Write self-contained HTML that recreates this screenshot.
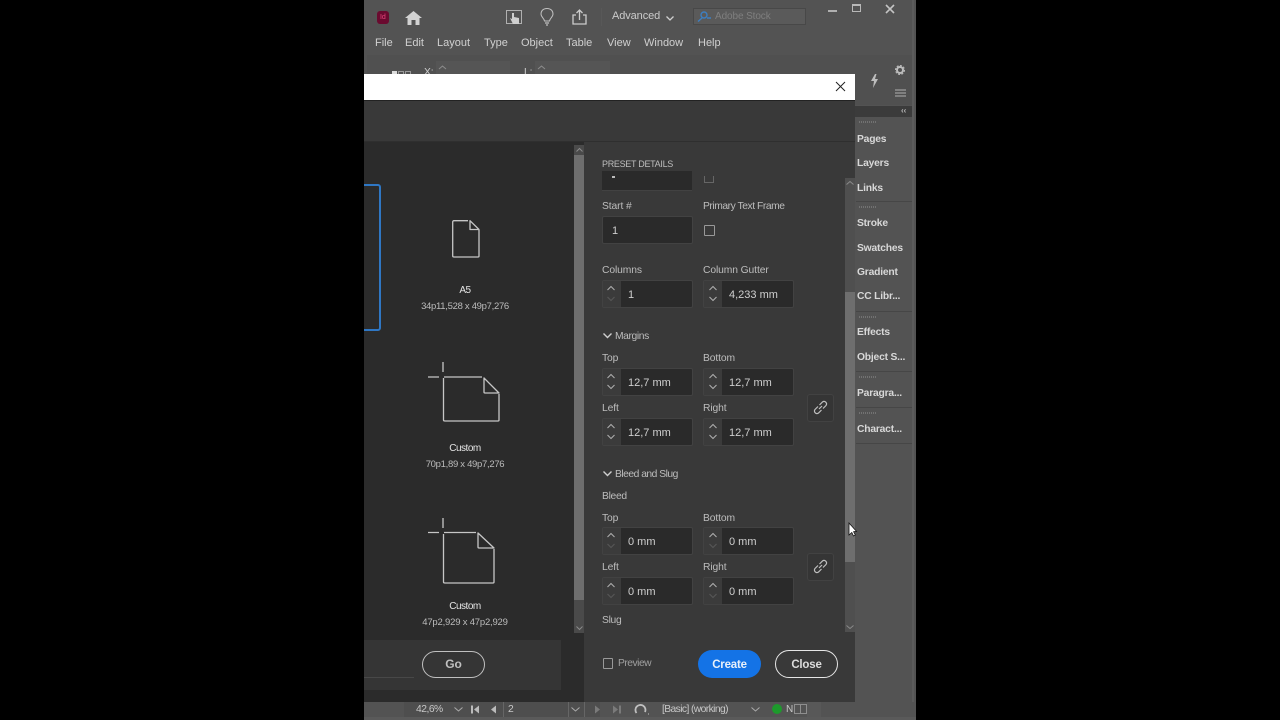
<!DOCTYPE html>
<html><head><meta charset="utf-8"><style>
html,body{margin:0;padding:0;width:1280px;height:720px;background:#000;overflow:hidden;font-family:"Liberation Sans",sans-serif}
.a{position:absolute}
.t{position:absolute;white-space:nowrap;font-size:10.3px;letter-spacing:-.1px;color:#bdbdbd;line-height:12px;margin-top:1px}
.d{font-size:9.5px;letter-spacing:-.3px;left:364px;width:202px;text-align:center;color:#bcbcbc}
.n{font-size:10px;letter-spacing:-.5px;left:364px;width:202px;text-align:center;color:#e4e4e4}
.m{position:absolute;top:37px;font-size:11px;color:#d0d0d0;line-height:13px;white-space:nowrap}
.p{position:absolute;left:857px;font-size:10.3px;letter-spacing:-.2px;font-weight:bold;color:#d8d8d8;line-height:12px;white-space:nowrap;margin-top:1px}
.f{position:absolute;background:#2a2a2a;border:1px solid #424242;border-radius:2px;box-sizing:border-box;height:28px}
.s{position:absolute;left:0;top:0;bottom:0;width:18px;background:#3b3b3b;border-right:1px solid #2a2a2a}
.v{position:absolute;left:25px;top:8px;font-size:11px;color:#cfcfcf;line-height:13px;white-space:nowrap}
svg{position:absolute;overflow:visible}
.sep{position:absolute;left:856px;width:56px;height:1px;background:#464646}
.g{position:absolute;left:859px;width:18px;height:2px;background:repeating-linear-gradient(90deg,#727272 0 1px,transparent 1px 2px)}
</style></head><body>
<div class="a" style="left:364px;top:0;width:552px;height:720px;background:#535353"></div>
<div class="a" style="left:912px;top:0;width:2px;height:720px;background:#5c5c5c"></div>
<div class="a" style="left:367px;top:55px;width:545px;height:50px;background:#505050"></div>

<div class="a" style="left:377px;top:11px;width:12px;height:13px;background:#6a0a2f;border-radius:3px"></div>
<div class="t" style="left:380px;top:11px;font-size:7px;color:#e8467e">Id</div>
<svg style="left:405px;top:11px" width="17" height="14"><path d="M0 7 L8.500 0 L17 7 L14.500 7 L14.500 14 L10.500 14 L10.500 9 L6.500 9 L6.500 14 L2.500 14 L2.500 7 Z" fill="#d2d2d2"/></svg>
<svg style="left:506px;top:10px" width="17" height="15" fill="none"><rect x=".5" y=".5" width="15" height="13" stroke="#b0b0b0"/><path d="M6 3 L6 9 L4 8 L7 14 L13 14 L13 8 L8 7 L8 3 Z" fill="#cfcfcf"/></svg>
<svg style="left:540px;top:8px" width="14" height="18" fill="none" stroke="#c0c0c0"><path d="M7 .5 C3 .5 1 3 1 6 C1 9 4 10 4.500 13 L9.500 13 C10 10 13 9 13 6 C13 3 11 .5 7 .5 Z"/><path d="M5 15 H9 M6 17 H8" stroke-width="1.300"/></svg>
<svg style="left:572px;top:9px" width="15" height="16" fill="none" stroke="#cccccc" stroke-width="1.300"><path d="M4 6 H1 V15 H14 V6 H11 M7.500 11 V1 M4.500 4 L7.500 1 L10.500 4"/></svg>
<div class="a" style="left:601px;top:8px;width:1px;height:18px;background:#585858"></div>
<div class="m" style="left:612px;top:10px;color:#cbcbcb;letter-spacing:-.1px">Advanced</div>
<svg style="left:666px;top:16px" width="8" height="5" fill="none" stroke="#d0d0d0" stroke-width="1.300"><path d="M.5 .5 L4 4 L7.500 .5"/></svg>
<div class="a" style="left:693px;top:8px;width:113px;height:17px;background:#5a5a5a;border:1px solid #484848;box-sizing:border-box"></div>
<svg style="left:697px;top:11px" width="14" height="11" fill="none" stroke="#3d7fc2" stroke-width="1.400"><circle cx="7" cy="4" r="3"/><path d="M5 7 L1 10.500 M10 7 H14"/></svg>
<div class="t" style="left:715px;top:10px;color:#7f7f7f;font-size:10px">Adobe Stock</div>
<div class="a" style="left:828px;top:10px;width:9px;height:2px;background:#b0b0b0"></div>
<div class="a" style="left:852px;top:4px;width:9px;height:8px;border:1.500px solid #b8b8b8;border-top-width:2.500px;box-sizing:border-box"></div>
<svg style="left:885px;top:4px" width="10" height="10" stroke="#c4c4c4" stroke-width="1.600"><path d="M1 1 L9 9 M9 1 L1 9"/></svg>

<div class="m" style="left:375px">File</div>
<div class="m" style="left:405px">Edit</div>
<div class="m" style="left:437px">Layout</div>
<div class="m" style="left:484px">Type</div>
<div class="m" style="left:521px">Object</div>
<div class="m" style="left:566px">Table</div>
<div class="m" style="left:607px">View</div>
<div class="m" style="left:644px">Window</div>
<div class="m" style="left:698px">Help</div>

<div class="a" style="left:436px;top:61px;width:74px;height:13px;background:#555"></div>
<div class="a" style="left:535px;top:61px;width:75px;height:13px;background:#555"></div>
<div class="a" style="left:392px;top:71px;width:5px;height:3px;background:#ddd"></div>
<div class="a" style="left:398px;top:71px;width:6px;height:3px;border:1px solid #999;border-bottom:0;box-sizing:border-box"></div>
<div class="a" style="left:405px;top:71px;width:6px;height:3px;border:1px solid #999;border-bottom:0;box-sizing:border-box"></div>
<div class="t" style="left:424px;top:66px;color:#cfcfcf">X:</div>
<div class="t" style="left:524px;top:66px;color:#cfcfcf">L:</div>
<svg style="left:438px;top:65px" width="9" height="5" fill="none" stroke="#8d8d8d"><path d="M1 4 L4.500 1 L8 4"/></svg>
<svg style="left:537px;top:65px" width="9" height="5" fill="none" stroke="#8d8d8d"><path d="M1 4 L4.500 1 L8 4"/></svg>

<svg style="left:870px;top:74px" width="9" height="14" fill="#bdbdbd"><path d="M5 0 L1 7 H4 L3 14 L8 5 H5 L6.500 0 Z"/></svg>
<svg style="left:895px;top:65px" width="10" height="10"><circle cx="5" cy="5" r="3" fill="none" stroke="#bcbcbc" stroke-width="2"/><circle cx="5" cy="5" r="4.500" fill="none" stroke="#bcbcbc" stroke-width="1" stroke-dasharray="2 1.500"/></svg>
<svg style="left:895px;top:89px" width="11" height="8" stroke="#b0b0b0"><path d="M0 1 H11 M0 4 H11 M0 7 H11"/></svg>

<div class="a" style="left:855px;top:106px;width:57px;height:11px;background:#3b3b3b"></div>
<div class="t" style="left:901px;top:105px;font-size:8px;color:#bbb;font-weight:bold;line-height:10px">‹‹</div>
<div class="g" style="top:121px"></div>
<div class="p" style="top:133px">Pages</div>
<div class="p" style="top:157px">Layers</div>
<div class="p" style="top:182px">Links</div>
<div class="sep" style="top:201px"></div>
<div class="g" style="top:206px"></div>
<div class="p" style="top:217px">Stroke</div>
<div class="p" style="top:242px">Swatches</div>
<div class="p" style="top:266px">Gradient</div>
<div class="p" style="top:290px">CC Libr...</div>
<div class="sep" style="top:311px"></div>
<div class="g" style="top:316px"></div>
<div class="p" style="top:326px">Effects</div>
<div class="p" style="top:351px">Object S...</div>
<div class="sep" style="top:371px"></div>
<div class="g" style="top:376px"></div>
<div class="p" style="top:387px">Paragra...</div>
<div class="sep" style="top:407px"></div>
<div class="g" style="top:412px"></div>
<div class="p" style="top:423px">Charact...</div>
<div class="sep" style="top:443px"></div>

<div class="a" style="left:364px;top:74px;width:491px;height:26px;background:#fff"></div>
<svg style="left:836px;top:82px" width="9" height="9" stroke="#222" stroke-width="1"><path d="M0 0 L9 9 M9 0 L0 9"/></svg>
<div class="a" style="left:364px;top:100px;width:491px;height:602px;background:#393939;border-top:1px solid #222;box-sizing:border-box"></div>
<div class="a" style="left:364px;top:141px;width:491px;height:1px;background:#2f2f2f"></div>
<div class="a" style="left:364px;top:142px;width:220px;height:560px;background:#2b2b2b"></div>
<div class="a" style="left:364px;top:640px;width:197px;height:50px;background:#353535"></div>
<div class="a" style="left:364px;top:677px;width:50px;height:1px;background:#484848"></div>

<div class="a" style="left:574px;top:145px;width:10px;height:488px;background:#4a4a4a"></div>
<div class="a" style="left:574px;top:155px;width:10px;height:445px;background:#6e6e6e"></div>
<svg style="left:576px;top:148px" width="7" height="4" fill="none" stroke="#8a8a8a"><path d="M.5 3.500 L3.500 .5 L6.500 3.500"/></svg>
<svg style="left:576px;top:626px" width="7" height="4" fill="none" stroke="#8a8a8a"><path d="M.5 .5 L3.500 3.500 L6.500 .5"/></svg>

<div class="a" style="left:350px;top:184px;width:31px;height:147px;border:2px solid #2f77c4;border-radius:3px;box-sizing:border-box"></div>
<div class="a" style="left:0;top:0;width:364px;height:720px;background:#000"></div>

<svg style="left:452px;top:220px" width="28" height="38" fill="none" stroke="#c6c6c6" stroke-width="1.300" stroke-linejoin="round"><path d="M16 .7 H2 Q.7 .7 .7 2 V36 Q.7 37 2 37 H26 Q27 37 27 36 V10"/><path d="M18 .7 V9.500 H27 Z"/></svg>
<div class="t n" style="top:284px">A5</div>
<div class="t d" style="top:300px">34p11,528 x 49p7,276</div>

<svg style="left:428px;top:362px" width="72" height="60" fill="none" stroke="#c6c6c6" stroke-width="1.300" stroke-linejoin="round"><path d="M15 0 V10 M0 15 H11"/><path d="M16 15 H54 M15.500 16 V58 Q15.500 59 17 59 H70 Q71 59 71 58 V32"/><path d="M56 16 V30 Q56 31 57 31 H71 Z"/></svg>
<div class="t n" style="top:442px">Custom</div>
<div class="t d" style="top:458px">70p1,89 x 49p7,276</div>

<svg style="left:428px;top:518px" width="67" height="67" fill="none" stroke="#c6c6c6" stroke-width="1.300" stroke-linejoin="round"><path d="M15 0 V10 M0 14.500 H11"/><path d="M16 14.500 H48 M15.500 16 V64 Q15.500 65 17 65 H65 Q66 65 66 64 V31"/><path d="M50 15 V29 Q50 30 51 30 H66 Z"/></svg>
<div class="t n" style="top:600px">Custom</div>
<div class="t d" style="top:616px;letter-spacing:-.2px">47p2,929 x 47p2,929</div>

<div class="a" style="left:422px;top:651px;width:63px;height:27px;border:1.500px solid #c0c0c0;border-radius:14px;box-sizing:border-box"></div>
<div class="t" style="left:422px;width:63px;text-align:center;top:656px;font-size:12px;font-weight:bold;color:#c0c0c0;line-height:14px">Go</div>

<div class="t" style="left:602px;top:157px;font-size:9px;letter-spacing:-.3px">PRESET DETAILS</div>
<div class="a" style="left:602px;top:171px;width:90px;height:20px;background:#2a2a2a;border-bottom:1px solid #424242;box-sizing:border-box"></div>
<div class="a" style="left:612px;top:176px;width:3px;height:2px;background:#bbb"></div>
<div class="a" style="left:704px;top:176px;width:10px;height:7px;border:1px solid #666;border-top:0;box-sizing:border-box"></div>

<div class="t" style="left:602px;top:200px">Start #</div>
<div class="t" style="left:703px;top:200px;letter-spacing:-.45px">Primary Text Frame</div>
<div class="f" style="left:602px;top:216px;width:91px"><div class="v" style="left:9px">1</div></div>
<div class="a" style="left:704px;top:225px;width:11px;height:11px;border:1px solid #999;border-radius:1px;box-sizing:border-box"></div>

<div class="t" style="left:602px;top:264px">Columns</div>
<div class="t" style="left:703px;top:264px">Column Gutter</div>
<div class="f" style="left:602px;top:280px;width:91px"><div class="s"></div><div class="v">1</div></div>
<div class="f" style="left:703px;top:280px;width:91px"><div class="s"></div><div class="v">4,233 mm</div></div>

<svg style="left:603px;top:333px" width="9" height="6" fill="none" stroke="#cfcfcf" stroke-width="1.400"><path d="M.5 .5 L4.500 4.500 L8.500 .5"/></svg>
<div class="t" style="left:615px;top:330px;letter-spacing:-.4px">Margins</div>
<div class="t" style="left:602px;top:352px">Top</div>
<div class="t" style="left:703px;top:352px">Bottom</div>
<div class="f" style="left:602px;top:368px;width:91px"><div class="s"></div><div class="v">12,7 mm</div></div>
<div class="f" style="left:703px;top:368px;width:91px"><div class="s"></div><div class="v">12,7 mm</div></div>
<div class="t" style="left:602px;top:402px">Left</div>
<div class="t" style="left:703px;top:402px">Right</div>
<div class="f" style="left:602px;top:418px;width:91px"><div class="s"></div><div class="v">12,7 mm</div></div>
<div class="f" style="left:703px;top:418px;width:91px"><div class="s"></div><div class="v">12,7 mm</div></div>

<svg style="left:607px;top:285px" width="8" height="18" fill="none" stroke="#b0b0b0"><path d="M.5 5 L4 1.500 L7.500 5"/><path d="M.5 12 L4 15.500 L7.500 12" stroke="#585858"/></svg>
<svg style="left:709px;top:285px" width="8" height="18" fill="none" stroke="#b0b0b0"><path d="M.5 5 L4 1.500 L7.500 5 M.5 12 L4 15.500 L7.500 12"/></svg>
<svg style="left:607px;top:373px" width="8" height="18" fill="none" stroke="#b0b0b0"><path d="M.5 5 L4 1.500 L7.500 5 M.5 12 L4 15.500 L7.500 12"/></svg>
<svg style="left:709px;top:373px" width="8" height="18" fill="none" stroke="#b0b0b0"><path d="M.5 5 L4 1.500 L7.500 5 M.5 12 L4 15.500 L7.500 12"/></svg>
<svg style="left:607px;top:423px" width="8" height="18" fill="none" stroke="#b0b0b0"><path d="M.5 5 L4 1.500 L7.500 5 M.5 12 L4 15.500 L7.500 12"/></svg>
<svg style="left:709px;top:423px" width="8" height="18" fill="none" stroke="#b0b0b0"><path d="M.5 5 L4 1.500 L7.500 5 M.5 12 L4 15.500 L7.500 12"/></svg>

<div class="a" style="left:807px;top:394px;width:27px;height:28px;background:#353535;border:1px solid #424242;border-radius:3px;box-sizing:border-box"></div>
<svg style="left:813px;top:400px" width="15" height="15" fill="none" stroke="#c0c0c0" stroke-width="1.200"><path d="M6 9 L9 6 M5 6.500 L2 9.500 A2.500 2.500 0 0 0 5.500 13 L8.500 10 M6.500 5 L9.500 2 A2.500 2.500 0 0 1 13 5.500 L10 8.500"/></svg>

<svg style="left:603px;top:471px" width="9" height="6" fill="none" stroke="#cfcfcf" stroke-width="1.400"><path d="M.5 .5 L4.500 4.500 L8.500 .5"/></svg>
<div class="t" style="left:615px;top:468px;letter-spacing:-.5px">Bleed and Slug</div>
<div class="t" style="left:602px;top:490px;letter-spacing:-.3px">Bleed</div>
<div class="t" style="left:602px;top:512px">Top</div>
<div class="t" style="left:703px;top:512px">Bottom</div>
<div class="f" style="left:602px;top:527px;width:91px"><div class="s"></div><div class="v">0 mm</div></div>
<div class="f" style="left:703px;top:527px;width:91px"><div class="s"></div><div class="v">0 mm</div></div>
<div class="t" style="left:602px;top:561px">Left</div>
<div class="t" style="left:703px;top:561px">Right</div>
<div class="f" style="left:602px;top:577px;width:91px"><div class="s"></div><div class="v">0 mm</div></div>
<div class="f" style="left:703px;top:577px;width:91px"><div class="s"></div><div class="v">0 mm</div></div>
<svg style="left:607px;top:532px" width="8" height="18" fill="none" stroke="#b0b0b0"><path d="M.5 5 L4 1.500 L7.500 5"/><path d="M.5 12 L4 15.500 L7.500 12" stroke="#585858"/></svg>
<svg style="left:709px;top:532px" width="8" height="18" fill="none" stroke="#b0b0b0"><path d="M.5 5 L4 1.500 L7.500 5"/><path d="M.5 12 L4 15.500 L7.500 12" stroke="#585858"/></svg>
<svg style="left:607px;top:582px" width="8" height="18" fill="none" stroke="#b0b0b0"><path d="M.5 5 L4 1.500 L7.500 5"/><path d="M.5 12 L4 15.500 L7.500 12" stroke="#585858"/></svg>
<svg style="left:709px;top:582px" width="8" height="18" fill="none" stroke="#b0b0b0"><path d="M.5 5 L4 1.500 L7.500 5"/><path d="M.5 12 L4 15.500 L7.500 12" stroke="#585858"/></svg>

<div class="a" style="left:807px;top:553px;width:27px;height:28px;background:#353535;border:1px solid #424242;border-radius:3px;box-sizing:border-box"></div>
<svg style="left:813px;top:559px" width="15" height="15" fill="none" stroke="#c0c0c0" stroke-width="1.200"><path d="M6 9 L9 6 M5 6.500 L2 9.500 A2.500 2.500 0 0 0 5.500 13 L8.500 10 M6.500 5 L9.500 2 A2.500 2.500 0 0 1 13 5.500 L10 8.500"/></svg>
<div class="t" style="left:602px;top:614px;letter-spacing:-.3px">Slug</div>

<div class="a" style="left:845px;top:178px;width:10px;height:454px;background:#4f4f4f"></div>
<div class="a" style="left:845px;top:292px;width:10px;height:270px;background:#6e6e6e"></div>
<svg style="left:846px;top:181px" width="8" height="4" fill="none" stroke="#8a8a8a"><path d="M.5 3.500 L4 .5 L7.500 3.500"/></svg>
<svg style="left:846px;top:625px" width="8" height="4" fill="none" stroke="#8a8a8a"><path d="M.5 .5 L4 3.500 L7.500 .5"/></svg>

<div class="a" style="left:603px;top:658px;width:10px;height:11px;border:1px solid #999;border-radius:1px;box-sizing:border-box"></div>
<div class="t" style="left:618px;top:657px;color:#a0a0a0;letter-spacing:-.5px">Preview</div>
<div class="a" style="left:698px;top:650px;width:63px;height:28px;background:#1473e6;border-radius:14px"></div>
<div class="t" style="left:698px;width:63px;text-align:center;top:657px;font-size:11.500px;font-weight:bold;letter-spacing:-.2px;color:#e8f0fa;line-height:14px">Create</div>
<div class="a" style="left:775px;top:650px;width:63px;height:28px;border:1.500px solid #e6e6e6;border-radius:14px;box-sizing:border-box"></div>
<div class="t" style="left:775px;width:63px;text-align:center;top:657px;font-size:11.500px;font-weight:bold;letter-spacing:-.2px;color:#dcdcdc;line-height:14px">Close</div>

<svg style="left:848px;top:522px" width="9" height="15"><path d="M1 1 V13 L3.800 10.500 L5.500 14 L7.300 13 L5.600 9.700 L8.500 9.400 Z" fill="#fff" stroke="#111" stroke-width=".8"/></svg>

<div class="a" style="left:364px;top:702px;width:552px;height:18px;background:#535353"></div>
<div class="a" style="left:404px;top:702px;width:196px;height:15px;background:#4e4e4e"></div>
<div class="a" style="left:503px;top:702px;width:1px;height:15px;background:#666"></div>
<div class="a" style="left:568px;top:702px;width:1px;height:15px;background:#666"></div>
<div class="a" style="left:584px;top:702px;width:1px;height:15px;background:#666"></div>
<div class="t" style="left:416px;top:703px;color:#c8c8c8;letter-spacing:-.5px">42,6%</div>
<svg style="left:454px;top:707px" width="9" height="5" fill="none" stroke="#aaa"><path d="M.5 .5 L4.500 4 L8.500 .5"/></svg>
<svg style="left:471px;top:705px" width="8" height="9" fill="#bbb"><rect width="2" height="8" y=".5"/><path d="M8 .5 V8.500 L3 4.500 Z"/></svg>
<svg style="left:490px;top:705px" width="6" height="9" fill="#bbb"><path d="M6 .5 V8.500 L1 4.500 Z"/></svg>
<div class="t" style="left:508px;top:703px;color:#c8c8c8">2</div>
<svg style="left:571px;top:707px" width="9" height="5" fill="none" stroke="#aaa"><path d="M.5 .5 L4.500 4 L8.500 .5"/></svg>
<svg style="left:595px;top:705px" width="6" height="9" fill="#7a7a7a"><path d="M0 .5 V8.500 L5 4.500 Z"/></svg>
<svg style="left:613px;top:705px" width="8" height="9" fill="#7a7a7a"><path d="M0 .5 V8.500 L5 4.500 Z"/><rect x="6" y=".5" width="2" height="8"/></svg>
<svg style="left:635px;top:703px" width="14" height="12" fill="none" stroke="#c0c0c0" stroke-width="1.800"><path d="M1.500 10 A5 5 0 1 1 10 9"/><path d="M13 11 H14" stroke-width="1"/></svg>
<div class="t" style="left:662px;top:703px;color:#c8c8c8;letter-spacing:-.6px">[Basic] (working)</div>
<svg style="left:751px;top:707px" width="9" height="5" fill="none" stroke="#aaa"><path d="M.5 .5 L4.500 4 L8.500 .5"/></svg>
<div class="a" style="left:772px;top:704px;width:10px;height:10px;background:#1d9a2c;border-radius:50%"></div>
<div class="t" style="left:786px;top:703px;color:#c8c8c8;font-size:10px">N</div>
<div class="a" style="left:794px;top:704px;width:13px;height:10px;border:1px solid #8e8e8e;box-sizing:border-box"></div>
<div class="a" style="left:800px;top:704px;width:1px;height:10px;background:#8e8e8e"></div>
<div class="a" style="left:807px;top:702px;width:14px;height:15px;background:#585858"></div>
<div class="a" style="left:364px;top:717px;width:552px;height:3px;background:#5a5a5a"></div>
<div class="a" style="left:916px;top:0;width:364px;height:720px;background:#000"></div>
</body></html>
